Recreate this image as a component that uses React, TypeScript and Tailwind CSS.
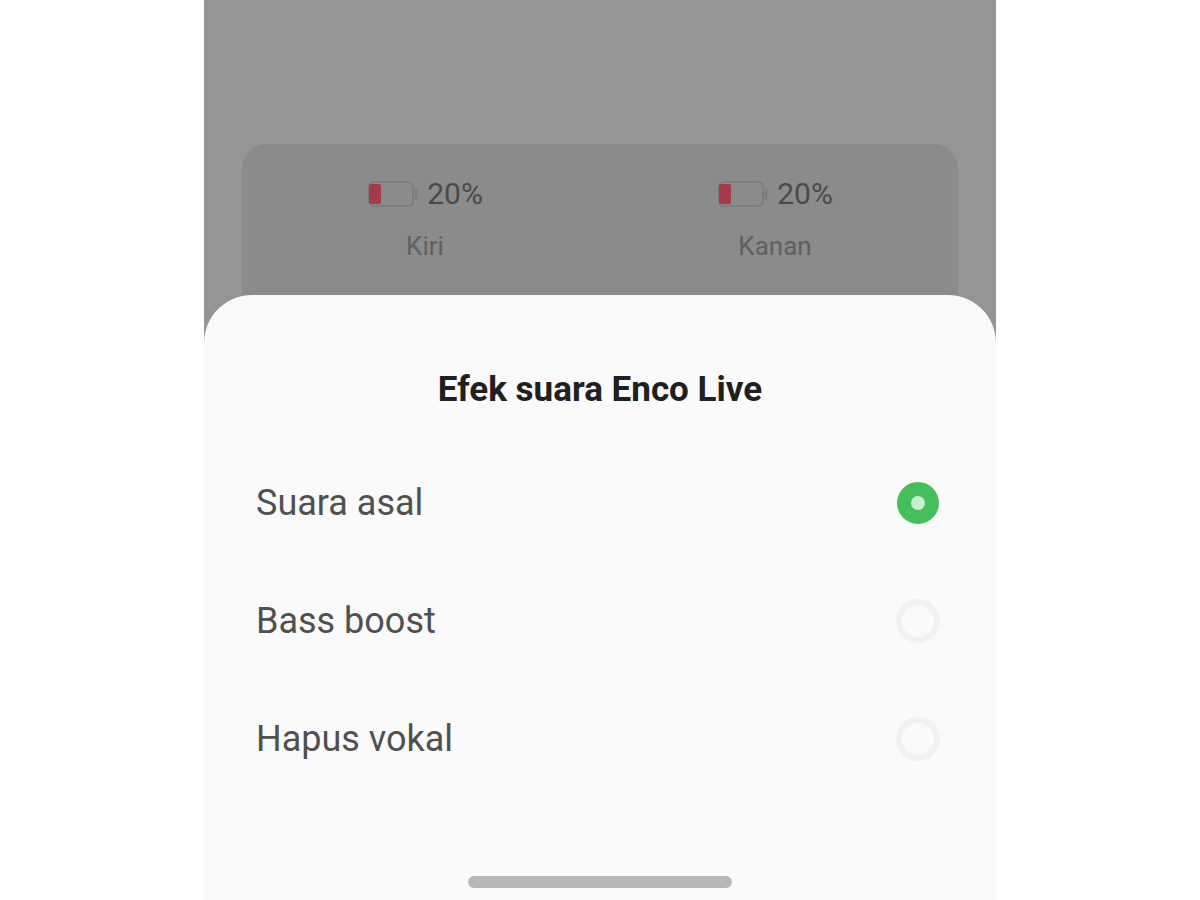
import { useState } from 'react';

const batteries = [
  { side: 'Kiri', level: 20 },
  { side: 'Kanan', level: 20 },
];

const effects = [
  { id: 'original', label: 'Suara asal' },
  { id: 'bass', label: 'Bass boost' },
  { id: 'vocal', label: 'Hapus vokal' },
];

function BatteryIcon({ level }: { level: number }) {
  return (
    <svg width="52" height="28" viewBox="0 0 52 28" fill="none" aria-hidden="true">
      <rect x="2" y="2" width="44" height="24" rx="5" stroke="#7d7d7d" strokeWidth="2" />
      <path d="M49 10v8" stroke="#7d7d7d" strokeWidth="3" strokeLinecap="round" />
      <rect x="2" y="4" width={(level / 100) * 60} height="20" rx="2" fill="#a33c48" />
    </svg>
  );
}

export default function App() {
  const [effect, setEffect] = useState('original');

  return (
    <div className="min-h-screen bg-white font-['Roboto',sans-serif]">
      <main className="mx-auto flex min-h-screen w-[66%] flex-col bg-[#959595]">
        <section className="mx-[38px] mt-36 grid h-[151px] grid-cols-2 rounded-t-3xl bg-[#8b8b8b] px-2 pt-8">
          {batteries.map((b) => (
            <div key={b.side} className="flex flex-col items-center">
              <div className="flex items-center gap-2">
                <BatteryIcon level={b.level} />
                <span className="text-[30px] leading-9 text-[#4a4a4a]">{b.level}%</span>
              </div>
              <span className="mt-4 text-[26px] leading-9 text-[#606060]">{b.side}</span>
            </div>
          ))}
        </section>

        <section className="flex flex-1 flex-col rounded-t-[48px] bg-[#fafafa] pt-[71px]">
          <h1 id="effect-title" className="text-center text-[35px] leading-12 font-bold text-[#202020]">
            Efek suara Enco Live
          </h1>

          <div role="radiogroup" aria-labelledby="effect-title" className="mt-[30px]">
            {effects.map((e) => (
              <label key={e.id} className="flex h-[118px] cursor-pointer items-center justify-between pr-14 pl-[52px]">
                <span className="text-4xl leading-12 text-[#505050]">{e.label}</span>
                <input
                  type="radio"
                  name="effect"
                  value={e.id}
                  checked={effect === e.id}
                  onChange={() => setEffect(e.id)}
                  className="size-[44px] appearance-none rounded-full border-[6px] border-[#f1f1f1] checked:mr-px checked:size-[42px] checked:border-[14px] checked:border-[#45bf5c] checked:bg-[#c9edcf]"
                />
              </label>
            ))}
          </div>

          <div className="mx-auto mt-auto mb-3 h-3 w-1/3 rounded-full bg-[#b8b8b8]" />
        </section>
      </main>
    </div>
  );
}
